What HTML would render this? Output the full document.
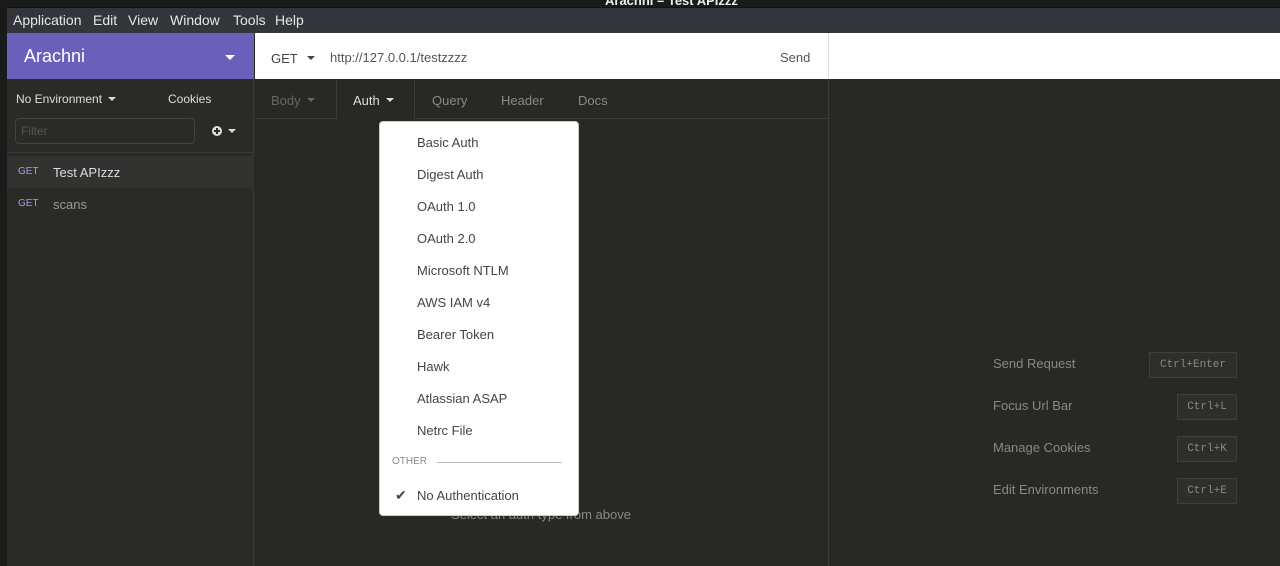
<!DOCTYPE html>
<html><head><style>
*{box-sizing:border-box;margin:0;padding:0}
body{width:1280px;height:566px;overflow:hidden;background:#282824;font-family:"Liberation Sans",sans-serif;position:relative;color:#ccc}
.a{position:absolute}
.t{font-size:13px;white-space:nowrap}
.m{position:absolute;top:12px;font-size:14px;color:#e6e6e6;white-space:nowrap}
.mono{font-family:"Liberation Mono",monospace;font-size:11px}
</style></head><body>
<div class="a" style="left:0;top:0;width:1280px;height:7px;background:#1a1a1a"></div>
<div class="a t" style="left:605px;top:-7px;color:#eee;font-weight:bold">Arachni – Test APIzzz</div>
<div class="a" style="left:0;top:7px;width:7px;height:559px;background:#1a1a1a"></div>
<div class="a" style="left:7px;top:7px;width:1273px;height:26px;background:#32363a;border-top:1px solid #111"></div>
<div class="m" style="left:13px">Application</div>
<div class="m" style="left:93px">Edit</div>
<div class="m" style="left:128px">View</div>
<div class="m" style="left:170px">Window</div>
<div class="m" style="left:233px">Tools</div>
<div class="m" style="left:275px">Help</div>

<!-- sidebar -->
<div class="a" style="left:7px;top:33px;width:247px;height:533px;background:#2a2a27;border-right:1px solid #3a3a37"></div>
<div class="a" style="left:7px;top:33px;width:247px;height:46px;background:#6a5fba"></div>
<div class="a" style="left:24px;top:46px;font-size:18px;color:#fff">Arachni</div>
<div class="a" style="left:225px;top:55px;border:5px solid transparent;border-top:5px solid #fff;border-bottom:0"></div>
<div class="a t" style="left:16px;top:92px;font-size:12px;color:#ddd">No Environment</div>
<div class="a" style="left:108px;top:97px;border:4px solid transparent;border-top:4px solid #ddd;border-bottom:0"></div>
<div class="a t" style="left:168px;top:92px;font-size:12px;color:#ddd">Cookies</div>
<div class="a" style="left:15px;top:118px;width:180px;height:26px;border:1px solid #44443f;border-radius:4px;background:#2a2a27"></div>
<div class="a t" style="left:21px;top:124px;font-size:12px;color:#555">Filter</div>
<div class="a" style="left:212px;top:126px;width:10px;height:10px;border-radius:50%;background:#ddd"></div>
<div class="a" style="left:214px;top:130px;width:6px;height:2px;background:#2a2a27"></div>
<div class="a" style="left:216px;top:128px;width:2px;height:6px;background:#2a2a27"></div>
<div class="a" style="left:228px;top:129px;border:4px solid transparent;border-top:4px solid #ddd;border-bottom:0"></div>
<div class="a" style="left:7px;top:152px;width:247px;height:1px;background:#3a3a37"></div>
<div class="a" style="left:7px;top:156px;width:247px;height:32px;background:#323230"></div>
<div class="a" style="left:18px;top:166px;font-size:10px;color:#a59ee0">GET</div>
<div class="a t" style="left:53px;top:165px;color:#ddd">Test APIzzz</div>
<div class="a" style="left:18px;top:198px;font-size:10px;color:#a59ee0">GET</div>
<div class="a t" style="left:53px;top:197px;color:#999">scans</div>

<!-- url bar -->
<div class="a" style="left:255px;top:33px;width:1025px;height:46px;background:#fff"></div>
<div class="a" style="left:828px;top:33px;width:1px;height:533px;background:#3a3a37"></div>
<div class="a" style="left:828px;top:33px;width:1px;height:46px;background:#ddd"></div>
<div class="a t" style="left:271px;top:51px;color:#444">GET</div>
<div class="a" style="left:307px;top:56px;border:4px solid transparent;border-top:4px solid #444;border-bottom:0"></div>
<div class="a t" style="left:330px;top:50px;color:#555">http://127.0.0.1/testzzzz</div>
<div class="a t" style="left:780px;top:50px;color:#555">Send</div>

<!-- tabs -->
<div class="a" style="left:255px;top:118px;width:573px;height:1px;background:#3c3c38"></div>
<div class="a" style="left:336px;top:80px;width:79px;height:39px;background:#282824;border-left:1px solid #3c3c38;border-right:1px solid #3c3c38"></div>
<div class="a t" style="left:271px;top:93px;color:#666">Body</div>
<div class="a" style="left:307px;top:98px;border:4px solid transparent;border-top:4px solid #666;border-bottom:0"></div>
<div class="a t" style="left:353px;top:93px;color:#ddd">Auth</div>
<div class="a" style="left:386px;top:98px;border:4px solid transparent;border-top:4px solid #ddd;border-bottom:0"></div>
<div class="a t" style="left:432px;top:93px;color:#888">Query</div>
<div class="a t" style="left:501px;top:93px;color:#888">Header</div>
<div class="a t" style="left:578px;top:93px;color:#888">Docs</div>

<div class="a t" style="left:451px;top:507px;color:#888">Select an auth type from above</div>

<!-- dropdown -->
<div class="a" style="left:379px;top:121px;width:200px;height:395px;background:#fff;border-radius:4px;border:1px solid #ccc"></div>
<div class="a t" style="left:417px;top:127px;color:#444;line-height:32px">Basic Auth<br>Digest Auth<br>OAuth 1.0<br>OAuth 2.0<br>Microsoft NTLM<br>AWS IAM v4<br>Bearer Token<br>Hawk<br>Atlassian ASAP<br>Netrc File</div>
<div class="a" style="left:392px;top:456px;font-size:10px;color:#888">OTHER</div>
<div class="a" style="left:437px;top:462px;width:125px;height:1px;background:#bbb"></div>
<div class="a t" style="left:395px;top:487px;color:#444;font-size:14px">✔</div>
<div class="a t" style="left:417px;top:488px;color:#444">No Authentication</div>

<!-- shortcuts -->
<div class="a t" style="left:993px;top:356px;color:#888">Send Request</div>
<div class="a t" style="left:993px;top:398px;color:#888">Focus Url Bar</div>
<div class="a t" style="left:993px;top:440px;color:#888">Manage Cookies</div>
<div class="a t" style="left:993px;top:482px;color:#888">Edit Environments</div>
<div class="a mono" style="left:1149px;top:352px;width:88px;height:26px;border:1px solid #3e3e3a;background:#2e2e2b;color:#888;text-align:center;line-height:24px">Ctrl+Enter</div>
<div class="a mono" style="left:1177px;top:394px;width:60px;height:26px;border:1px solid #3e3e3a;background:#2e2e2b;color:#888;text-align:center;line-height:24px">Ctrl+L</div>
<div class="a mono" style="left:1177px;top:436px;width:60px;height:26px;border:1px solid #3e3e3a;background:#2e2e2b;color:#888;text-align:center;line-height:24px">Ctrl+K</div>
<div class="a mono" style="left:1177px;top:478px;width:60px;height:26px;border:1px solid #3e3e3a;background:#2e2e2b;color:#888;text-align:center;line-height:24px">Ctrl+E</div>
</body></html>
